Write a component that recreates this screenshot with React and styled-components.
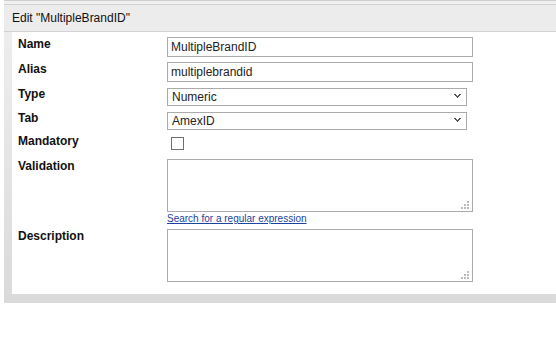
import React from 'react';
import styled, { createGlobalStyle } from 'styled-components';

const GlobalStyle = createGlobalStyle`
  html, body {
    margin: 0;
    padding: 0;
    background: #fff;
    overflow: hidden;
    font-family: "Liberation Sans", Arial, sans-serif;
  }
`;

const Page = styled.div`
  padding-left: 4px;
`;

const Panel = styled.div`
  border-top: 1px solid #cfcfcf;
  padding-top: 3px;
  background: linear-gradient(#f0f0f0, #dadada);
`;

const Header = styled.div`
  height: 26px;
  background: #ececec;
  border-top: 1px solid #d2d2d2;
  border-bottom: 1px solid #d2d2d2;
  display: flex;
  align-items: center;
  padding-left: 8px;
  font-size: 12px;
  color: #111;
`;

const Body = styled.div`
  padding: 0 0 9px 8px;
`;

const Content = styled.div`
  background: #fff;
  padding: 5px 0 12px 6px;
  display: grid;
  grid-template-columns: 149px 1fr;
  align-items: start;
`;

const Label = styled.div`
  font-size: 12px;
  font-weight: 700;
  line-height: 14px;
  color: #111;
  margin-top: ${p => p.$mt || 0}px;
`;

const Field = styled.div`
  margin-top: ${p => p.$mt || 0}px;
  display: flex;
  flex-direction: column;
  align-items: flex-start;
`;

const TextInput = styled.input`
  box-sizing: border-box;
  width: 306px;
  height: 20px;
  margin: 0;
  border: 1px solid #ababab;
  padding: 0 3px;
  font-family: "Liberation Sans", Arial, sans-serif;
  font-size: 12px;
  color: #222;
  outline: none;
`;

const SelectWrap = styled.div`
  position: relative;
  width: 300px;
  height: 18px;
`;

const Select = styled.select`
  appearance: none;
  box-sizing: border-box;
  width: 100%;
  height: 100%;
  margin: 0;
  border: 1px solid #ababab;
  border-radius: 0;
  background: #fff;
  padding: 0 4px;
  font-family: "Liberation Sans", Arial, sans-serif;
  font-size: 12px;
  color: #222;
  outline: none;
`;

const Chevron = styled.svg`
  position: absolute;
  right: 6px;
  top: 7px;
  pointer-events: none;
`;

const Check = styled.input`
  appearance: none;
  box-sizing: border-box;
  width: 13px;
  height: 13px;
  margin: 3px 0 0 4px;
  border: 1px solid #707070;
  background: #fff;
`;

const AreaWrap = styled.div`
  position: relative;
  width: 306px;
  height: 53px;
`;

const TextArea = styled.textarea`
  box-sizing: border-box;
  width: 100%;
  height: 100%;
  margin: 0;
  border: 1px solid #ababab;
  resize: none;
  outline: none;
  display: block;
`;

const Grip = styled.svg`
  position: absolute;
  right: 4px;
  bottom: 3px;
  pointer-events: none;
`;

const Link = styled.a`
  font-size: 10px;
  line-height: 12px;
  color: #1c43a0;
  text-decoration: underline;
  margin-top: 1px;
`;

const ChevronIcon = () => (
  <Chevron width="7" height="4" viewBox="0 0 7 4">
    <path d="M0 0h2v1h1v1h1V1h1V0h2v1h-1v1h-1v1h-1v1h-1V3h-1V2h-1V1H0z" fill="#555" />
  </Chevron>
);

const GripIcon = () => (
  <Grip width="8" height="8" viewBox="0 0 8 8">
    <g fill="#bcbcbc">
      <rect x="6" y="0" width="2" height="2" />
      <rect x="3" y="3" width="2" height="2" />
      <rect x="6" y="3" width="2" height="2" />
      <rect x="0" y="6" width="2" height="2" />
      <rect x="3" y="6" width="2" height="2" />
      <rect x="6" y="6" width="2" height="2" />
    </g>
  </Grip>
);

const App = () => {
  return (
    <Page>
      <GlobalStyle />
      <Panel>
        <Header>Edit "MultipleBrandID"</Header>
        <Body>
          <Content>
            <Label>Name</Label>
            <Field><TextInput defaultValue="MultipleBrandID" /></Field>

            <Label $mt={5}>Alias</Label>
            <Field $mt={5}><TextInput defaultValue="multiplebrandid" /></Field>

            <Label $mt={5}>Type</Label>
            <Field $mt={5}>
              <SelectWrap>
                <Select defaultValue="Numeric"><option>Numeric</option></Select>
                <ChevronIcon />
              </SelectWrap>
            </Field>

            <Label $mt={6}>Tab</Label>
            <Field $mt={6}>
              <SelectWrap>
                <Select defaultValue="AmexID"><option>AmexID</option></Select>
                <ChevronIcon />
              </SelectWrap>
            </Field>

            <Label $mt={5}>Mandatory</Label>
            <Field $mt={5}><Check type="checkbox" /></Field>

            <Label $mt={9}>Validation</Label>
            <Field $mt={9}>
              <AreaWrap>
                <TextArea />
                <GripIcon />
              </AreaWrap>
              <Link href="#">Search for a regular expression</Link>
            </Field>

            <Label $mt={4}>Description</Label>
            <Field $mt={4}>
              <AreaWrap>
                <TextArea />
                <GripIcon />
              </AreaWrap>
            </Field>
          </Content>
        </Body>
      </Panel>
    </Page>
  );
};

export default App;
